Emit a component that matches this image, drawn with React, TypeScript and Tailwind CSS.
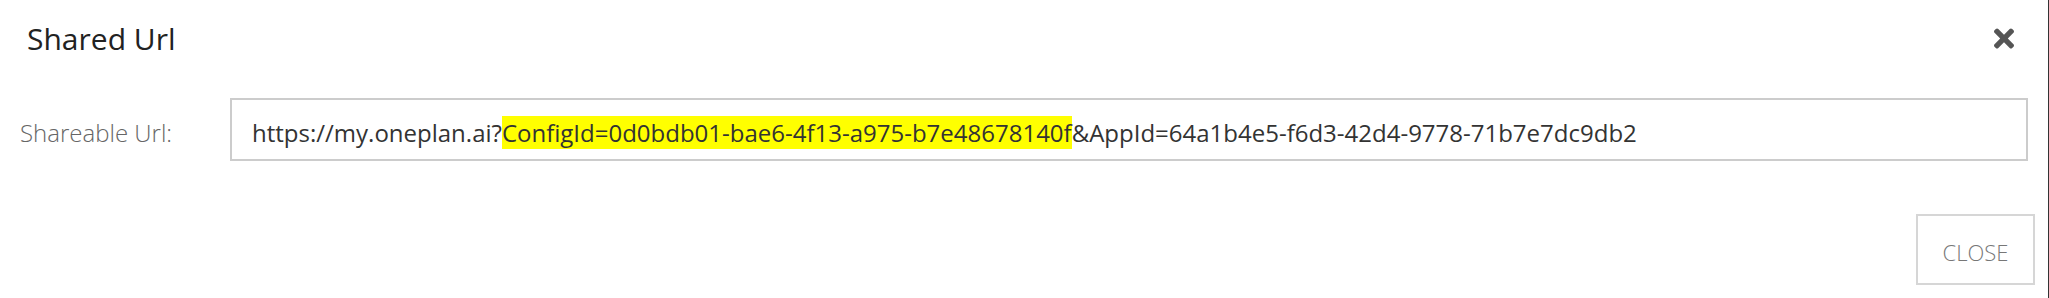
import React from "react";

const shareUrl = {
  base: "https://my.oneplan.ai?",
  config: "ConfigId=0d0bdb01-bae6-4f13-a975-b7e48678140f",
  rest: "&AppId=64a1b4e5-f6d3-42d4-9778-71b7e7dc9db2",
};

function TimesIcon() {
  return (
    <svg width="20" height="21" viewBox="0 80 352 352" fill="#555555">
      <path d="M242.72 256l100.07-100.07c12.28-12.28 12.28-32.19 0-44.48l-22.24-22.24c-12.28-12.28-32.19-12.28-44.48 0L176 189.28 75.93 89.21c-12.28-12.28-32.19-12.28-44.48 0L9.21 111.45c-12.28 12.28-12.28 32.19 0 44.48L109.28 256 9.21 356.07c-12.28 12.28-12.28 32.19 0 44.48l22.24 22.24c12.28 12.28 32.2 12.28 44.48 0L176 322.72l100.07 100.07c12.28 12.28 32.2 12.28 44.48 0l22.24-22.24c12.28-12.28 12.28-32.19 0-44.48L242.72 256z" />
    </svg>
  );
}

export default function App() {
  return (
    <div className="h-[298px] w-full bg-white border-r border-[#333333] flex flex-col font-['Open_Sans',sans-serif]">
      {/* Header */}
      <div className="h-[79px] flex items-start justify-between pl-[27px] pr-[34px] pt-[19px]">
        <h2 className="text-[30px] leading-[40px] text-[#222222] font-normal">Shared Url</h2>
        <button className="mt-[9px]" aria-label="Close">
          <TimesIcon />
        </button>
      </div>

      {/* Url row */}
      <div className="mt-[19px] flex pr-[20px]">
        <label className="w-[230px] shrink-0 pl-[20px] pt-[8px] h-[63px] text-[24px] leading-[53px] font-light text-[#666666]">
          Shareable Url:
        </label>
        <div className="flex-1 h-[63px] border-2 border-[#cccccc] pl-[20px] pt-[6px] text-[24px] leading-[53px] text-[#333333] whitespace-nowrap overflow-hidden">
          {shareUrl.base}
          <span className="bg-[#ffff00]">{shareUrl.config}</span>
          {shareUrl.rest}
        </div>
      </div>

      {/* Footer */}
      <div className="mt-[53px] flex justify-end pr-[13px]">
        <button className="w-[119px] h-[71px] border-2 border-[#d6d6d6] pt-[4px] text-[22px] leading-[22px] font-light text-[#777777]">
          CLOSE
        </button>
      </div>
    </div>
  );
}
